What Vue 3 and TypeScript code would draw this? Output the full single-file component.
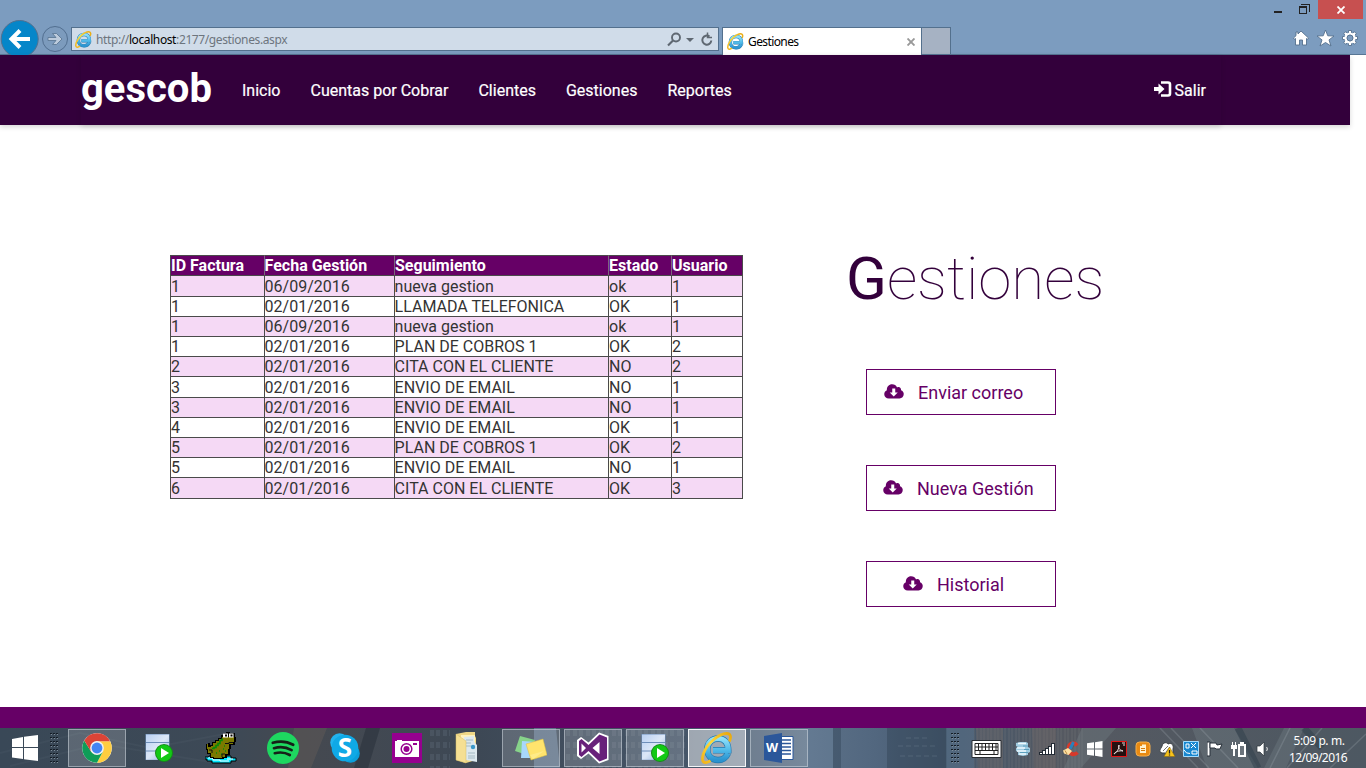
<script setup lang="ts">
interface Gestion {
  id: number
  fecha: string
  seguimiento: string
  estado: string
  usuario: number
}
interface Accion {
  texto: string
  clase: string
}
interface Tarea {
  icono: string
  estado: string
  letra?: string
}

const menu: string[] = ['Inicio', 'Cuentas por Cobrar', 'Clientes', 'Gestiones', 'Reportes']
const columnas: string[] = ['ID Factura', 'Fecha Gestión', 'Seguimiento', 'Estado', 'Usuario']

const g = (id: number, fecha: string, seguimiento: string, estado: string, usuario: number): Gestion =>
  ({ id, fecha, seguimiento, estado, usuario })

const gestiones: Gestion[] = [
  g(1, '06/09/2016', 'nueva gestion', 'ok', 1),
  g(1, '02/01/2016', 'LLAMADA TELEFONICA', 'OK', 1),
  g(1, '06/09/2016', 'nueva gestion', 'ok', 1),
  g(1, '02/01/2016', 'PLAN DE COBROS 1', 'OK', 2),
  g(2, '02/01/2016', 'CITA CON EL CLIENTE', 'NO', 2),
  g(3, '02/01/2016', 'ENVIO DE EMAIL', 'NO', 1),
  g(3, '02/01/2016', 'ENVIO DE EMAIL', 'NO', 1),
  g(4, '02/01/2016', 'ENVIO DE EMAIL', 'OK', 1),
  g(5, '02/01/2016', 'PLAN DE COBROS 1', 'OK', 2),
  g(5, '02/01/2016', 'ENVIO DE EMAIL', 'NO', 1),
  g(6, '02/01/2016', 'CITA CON EL CLIENTE', 'OK', 3),
]

const acciones: Accion[] = [
  { texto: 'Enviar correo', clase: 'correo' },
  { texto: 'Nueva Gestión', clase: 'nueva' },
  { texto: 'Historial', clase: 'historial' },
]

const tareas: Tarea[] = [
  { icono: 'chrome', estado: 'open' },
  { icono: 'server', estado: '' },
  { icono: 'frog', estado: '' },
  { icono: 'spotify', estado: '' },
  { icono: 'skype', estado: '', letra: 'S' },
  { icono: 'camera', estado: '' },
  { icono: 'folder', estado: '' },
  { icono: 'notes', estado: 'open' },
  { icono: 'vs', estado: 'open' },
  { icono: 'server', estado: 'open' },
  { icono: 'ie', estado: 'active' },
  { icono: 'word', estado: 'open', letra: 'W' },
]

const bandeja: string[] = ['db', 'signal', 'ccleaner', 'win', 'acrobat', 'orange', 'cloudwarn', 'intel', 'flag', 'battery', 'sound']
</script>

<template>
  <div class="desktop">
    <svg class="defs" width="0" height="0" aria-hidden="true">
      <defs>
        <linearGradient id="blueE" x1="0" y1="0" x2="0" y2="1">
          <stop offset="0" stop-color="#8fe0fa" /><stop offset=".55" stop-color="#4fb9e8" /><stop offset="1" stop-color="#2b93cf" />
        </linearGradient>
        <linearGradient id="gold" x1="0" y1="1" x2="1" y2="0">
          <stop offset="0" stop-color="#f0b41c" /><stop offset=".5" stop-color="#ffd93a" /><stop offset="1" stop-color="#e8a70e" />
        </linearGradient>
        <linearGradient id="rack" x1="0" y1="0" x2="1" y2="1">
          <stop offset="0" stop-color="#b9d0f2" /><stop offset=".5" stop-color="#dce7f7" /><stop offset="1" stop-color="#8eaedd" />
        </linearGradient>
      </defs>
      <symbol id="ie" viewBox="0 0 32 32">
        <path d="M27 21.2C25 25.800 21.500 28 17 28 10.500 28 6.300 23.500 6.300 17.300 6.300 10.800 11 6.500 17 6.500c6.300 0 10.300 4.200 10.300 11.800H12" fill="none" stroke="#2377ad" stroke-width="6.400" />
        <path d="M27 21.2C25 25.800 21.500 28 17 28 10.500 28 6.300 23.500 6.300 17.300 6.300 10.800 11 6.500 17 6.500c6.300 0 10.300 4.200 10.300 11.800H12" fill="none" stroke="url(#blueE)" stroke-width="5.200" />
        <path d="M28.500 9.500C30.500 4.500 29.500 1.500 25.500 1.500 18 1.500 6 11.500 2.500 21.500.5 27.500 1.500 31 5 30.500c1.500-.200 3-.900 4.500-1.900" fill="none" stroke="url(#gold)" stroke-width="2.800" />
      </symbol>
      <symbol id="chrome" viewBox="0 0 32 32">
        <circle cx="16" cy="16" r="14.800" fill="#fff" />
        <path d="M16 9.200H29.100A14.800 14.800 0 0 1 16 30.800L22 19.400Z" fill="#ffcd40" />
        <path d="M3.200 8.600A14.800 14.800 0 0 0 16 30.800L21.900 19.600 10.100 19.400Z" fill="#0f9d58" />
        <path d="M3.200 8.600 10 19.400 12 11 16 9.200H29.100A14.800 14.800 0 0 0 3.200 8.600Z" fill="#db4437" />
        <circle cx="16" cy="16" r="6.900" fill="#f1f1f1" /><circle cx="16" cy="16" r="5.400" fill="#4285f4" />
      </symbol>
      <symbol id="server" viewBox="0 0 32 32">
        <path d="M2.500 2h24v26h-24z" fill="#6d8eb9" />
        <path d="M3 2.500h23v7.500H3zM3 11h23v7.500H3zM3 19.500h23v8.200H3z" fill="url(#rack)" />
        <circle cx="21" cy="21" r="9" fill="#168b17" /><circle cx="21" cy="21" r="8" fill="#12c915" />
        <path d="M18 16v10l8-5z" fill="#fff" />
      </symbol>
      <symbol id="frog" viewBox="0 0 32 32">
        <path d="M0 25h4v-1h22v2h5v3h-5v2H7v-2H2v-2H0z" fill="#00e7ff" stroke="#000" />
        <path d="M3 26h5v2h7v1h9M22 27h6" stroke="#fff" fill="none" />
        <path d="M7 10h3V8h3V6h3V3h2V1h3V0h4v1h5v4h1v5h-1v3h-4v4h-1v6h-3v3h-3v1H8v-1H5v-4H2v-4H1v-6h2v-1h2v2h2z" fill="#000" />
        <path d="M8 11h3V9h3V7h3V5h12v5h-1v2h-4v5h-1v5h-3v3h-3v1H9v-1H6v-4H3v-4H2v-5h1v3h3v-1h2z" fill="#7c7900" />
        <path d="M18 1.500h5v4h-5zM24 1.500h4.500v4H24z" fill="#fff" /><path d="M20 2.500h2v2h-2zM25.500 2.500h2v2h-2z" fill="#000" />
        <path d="M17 6.500v2h-2v3h-2v2h-2v2H9v1H7M14 19h1M18 17h1M16 22h1M20 19h1M11 21h1M19 14h1" fill="none" stroke="#078b07" stroke-width="1.600" />
        <path d="M20 11.500h4v-1h4M17 25v-3h3M7 21v-3H4" fill="none" stroke="#111" />
      </symbol>
      <symbol id="spotify" viewBox="0 0 32 32">
        <circle cx="16" cy="16" r="16" fill="#1ed760" />
        <path d="M5.800 10.800c7-2.100 14.200-1.500 20.400 2M7 16.200c6.200-1.800 12.200-1.100 17.600 1.900M7.800 21.200c5.200-1.300 10.300-.900 15 1.800" stroke="#162018" stroke-width="2.700" stroke-linecap="round" fill="none" />
      </symbol>
      <symbol id="skype" viewBox="0 0 32 32">
        <circle cx="10.500" cy="10.500" r="9.300" fill="#22b3ee" /><circle cx="21.500" cy="21.500" r="9.300" fill="#0b9fdc" /><circle cx="16" cy="16" r="13.300" fill="#0fa9e6" />
      </symbol>
      <symbol id="camera" viewBox="0 0 32 32">
        <path d="M1 1h30v30H1z" fill="#96008f" /><path d="M4 9h2V8h5v1h17v16H4z" fill="#fff" />
        <circle cx="15.500" cy="17" r="5.300" fill="#fff" stroke="#96008f" stroke-width="1.500" /><circle cx="15.500" cy="17" r="3" fill="#96008f" />
        <path d="M22 11h4v2h-4z" fill="#96008f" />
      </symbol>
      <symbol id="folder" viewBox="0 0 32 32">
        <path d="M3 2 13 0h9v4l1 2v22l-10 3-10-3z" fill="#efd786" /><path d="M8 3h14v24H8z" fill="#fff2bd" />
        <path d="m11 5 10-1v6l3 3v17l-11-2z" fill="#dce8ee" /><path d="M13 8h7M13 11h5M13 14h5M15 21h7M15 24h7M15 26h7" stroke="#a4bac4" />
        <circle cx="20" cy="15" r="2.200" fill="#3b98c9" /><path d="m3 2 10 7v22l-10-3z" fill="#f5df93" stroke="#d4bc69" stroke-width=".500" />
      </symbol>
      <symbol id="notes" viewBox="0 0 32 32">
        <path d="m5 4 15 4-5 16L0 19z" fill="#87d38a" /><path d="m7 9 15 1-1 16H6z" fill="#a8d7fb" />
        <path d="m11 12 17-5 4 16-16 5z" fill="#ffe46d" stroke="#d9bd42" stroke-width=".500" /><path d="m15 23 14-4-11 8z" fill="#fff09b" opacity=".600" />
      </symbol>
      <symbol id="vs" viewBox="0 0 32 32">
        <path d="M22 .5 31.500 4v24L22 31.500 11.500 21.500 4 27 0 24V8l4-3 7.500 5.500z" fill="#fff" />
        <path d="M22.500 2.500 30 5.500v21l-7.500 3-11-10.500L4.500 25 2 23V9l2.500-2 7 6z" fill="#68217a" />
        <path d="m22.500 10-7 6 7 6zM4.500 11.500v9L9 16z" fill="#fff" />
      </symbol>
      <symbol id="word" viewBox="0 0 32 32">
        <path d="M17 4.500h13v23H17z" fill="#fff" stroke="#2b579a" /><path d="M19 8h9M19 11.500h9M19 15h9M19 18.500h9M19 22h9" stroke="#2b579a" stroke-width="1.500" />
        <path d="M1 4 19 1v30L1 28z" fill="#2b579a" />
      </symbol>
      <symbol id="db" viewBox="0 0 16 16">
        <path d="M1 2 5 1h6l2 1v4l2 1v4l-2 1v2l-5 1-5-1v-3l-2-1V7l2-1-2-1z" fill="#9fcbe0" />
        <path d="M3 2.500h8M2 7h8M2 10h9M4 13h7" stroke="#eefaff" stroke-width="1.300" /><path d="M8 5h5M9 8.500h5M5 11.500h8" stroke="#5b9fbd" />
      </symbol>
      <symbol id="signal" viewBox="0 0 16 16"><path d="M0 11h3V9h3V7h3V5h3V2h4v12H0z" fill="#222b35" /><path d="M1 12h2v1H1zM4 10h2v3H4zM7 8h2v5H7zM10 6h2v7h-2zM13 3h2v10h-2z" fill="#fff" /></symbol>
      <symbol id="ccleaner" viewBox="0 0 16 16">
        <path d="M14 4.500C11 .5 5.500 2 5.500 7.500S11 15 14.500 11.500" fill="none" stroke="#d8392a" stroke-width="3.800" />
        <path d="m10.500 1-3.500 7" stroke="#2a81bc" stroke-width="3" /><path d="m5 7 4 3-3.500 4L1 12.500 0 9.500z" fill="#ffdfa0" /><path d="m2 9.500 2 3.500" stroke="#b98c46" />
      </symbol>
      <symbol id="win" viewBox="0 0 16 16"><path d="M0 2.300 7 1.300v6.200H0zM8 1.200 15.500 0v7.500H8zM0 8.500h7v6.200l-7-1zM8 8.500h7.500V16L8 14.800z" fill="#fff" /></symbol>
      <symbol id="acrobat" viewBox="0 0 16 16"><path d="M.5.5h15v15H.5z" fill="#24100f" stroke="#e51515" /><path d="M8 4c-1.500 2.500 0 4.500 4 6-4-.8-8 1-9 3 2-1 6-6 5-9ZM11 2h3M12 4h2" fill="none" stroke="#ece1df" /></symbol>
      <symbol id="orange" viewBox="0 0 16 16"><rect x="1" y="1" width="14" height="14" rx="3.500" fill="#e98a12" stroke="#f5b04e" /><path d="M5 5h6v7H5zM7 3.500h4v2H7z" fill="#fff2cf" /><path d="M6 7.500h4M6 9.500h4" stroke="#d67b0e" /></symbol>
      <symbol id="cloudwarn" viewBox="0 0 16 16"><path d="M1 11C0 8 3 7 3 5c1-4 5-4 6-2 4-2 6 2 5 5v4H3z" fill="#fff" stroke="#3b4044" /><path d="m4 10 5-5M7 11l4-5" stroke="#777" /><path d="m10.500 6 5.500 9.500H5z" fill="#f8c31b" stroke="#84640b" stroke-width=".500" /><path d="M10.500 9v3.500M10.500 13.500v1" stroke="#222" stroke-width="1.300" /></symbol>
      <symbol id="intel" viewBox="0 0 16 16"><path d="M.5.5h15v15H.5z" fill="#1787d0" stroke="#a2dcff" /><path d="M3 3h3v4H3zM8 2l5 5M13 2 8 7M1 9q2 4 6 3.500M9 10h5v3H9z" fill="none" stroke="#fff" /></symbol>
      <symbol id="flag" viewBox="0 0 16 16"><path d="M0 1h3v14H0z" fill="#fff" stroke="#28313a" /><path d="M3 2h6l1 2 5-1-2 5H9L8 7H3z" fill="#fff" stroke="#28313a" /></symbol>
      <symbol id="battery" viewBox="0 0 16 16"><path d="M7 3h2V1h4v2h2v13H7z" fill="#fff" /><path d="M9 5h4v9H9z" fill="#6b747c" /><path d="M1.500 1v3M4.500 1v3" stroke="#fff" /><path d="M0 4h6v4H4v7H2V8H0z" fill="#fff" /></symbol>
      <symbol id="sound" viewBox="0 0 16 16"><path d="M2 5h3l4-4v14l-4-4H2z" fill="#fff" stroke="#2d343b" stroke-width=".700" /><path d="M11.500 6c1 1 1 3 0 4" stroke="#eee" fill="none" /></symbol>
      <symbol id="grip" viewBox="0 0 8 31">
        <path v-for="n in 8" :key="n" :d="`M0 ${(n - 1) * 4 + .5}h2m1 0h2m1 0h2`" stroke="#141c25" stroke-width="1" />
        <path v-for="n in 8" :key="'l' + n" :d="`M1 ${(n - 1) * 4 + 1.5}h1m2 0h1m2 0h1`" stroke="#7d8b98" stroke-width="1" />
      </symbol>
    </svg>

    <header class="browser">
      <div class="window-buttons">
        <svg width="60" height="19" viewBox="0 0 60 19" shape-rendering="crispEdges">
          <path d="M6 11h8v2H6z" fill="#222" /><path d="M31.500 6.500h7v7h-7zM33 4.500h8.500V12" fill="none" stroke="#222" /><path d="M31 6h8v2h-8z" fill="#222" />
        </svg>
        <span class="close"><svg width="8" height="8" viewBox="0 0 8 8"><path d="m.5.500 7 7m0-7-7 7" stroke="#fff" stroke-width="1.800" /></svg></span>
      </div>
      <div class="toolbar">
        <svg class="nav-arrows" width="71" height="35" viewBox="0 0 71 35">
          <circle cx="19.700" cy="19" r="18.500" fill="#0586c9" stroke="#52708f" />
          <path d="M11.500 19h18.500M20 10.500 11.500 19l8.500 8.500" fill="none" stroke="#fff" stroke-width="4" />
          <circle cx="55" cy="19" r="12.500" fill="#7c9bbd" stroke="#526f90" />
          <path d="M48 17.500h8l-3.500-4h4l5.500 5.500-5.500 5.500h-4l3.500-4h-8z" fill="#bccbdc" stroke="#56728f" stroke-width=".800" />
        </svg>
        <div class="address">
          <svg class="favicon"><use href="#ie" /></svg>
          <span class="url">http://<b>localhost</b>:2177/gestiones.aspx</span>
          <svg class="addr-icons" width="48" height="18" viewBox="0 0 48 18" fill="none" stroke="#5f6872">
            <circle cx="9" cy="7.500" r="4" stroke-width="1.900" /><path d="m6 10.500-5 5" stroke-width="2.200" />
            <path d="M19 8h8l-4 4z" fill="#5f6872" stroke="none" />
            <path d="M42.500 6.500a4.500 4.500 0 1 0 1.800 4" stroke-width="2" /><path d="M40.500 2.500v5H45" stroke-width="1.500" />
          </svg>
        </div>
        <div class="tab">
          <svg class="favicon"><use href="#ie" /></svg>
          <span>Gestiones</span>
          <svg width="8" height="8" viewBox="0 0 8 8"><path d="m.5.500 7 7m0-7-7 7" stroke="#999" stroke-width="1.900" /></svg>
        </div>
        <div class="new-tab"></div>
        <svg class="tools" width="68" height="20" viewBox="0 0 68 20" fill="#fff" stroke="#55708d" stroke-width=".900">
          <path d="m8 2 7.500 7-1 1.300L13.500 9.500V16H9.500v-5h-3v5h-4V9.500l-1 .800L.5 9 3 6.700V3h2v2z" />
          <path d="m32.500 1 2.300 5.800 6.200.2-5 3.900 2 6.100-5.500-3.500-5.500 3.500 2-6.100-5-3.900 6.200-.2z" />
          <g transform="translate(57 9)">
            <path v-for="a in 8" :key="a" :transform="`rotate(${a * 45})`" d="M-1.500-7.500h3v4h-3z" />
            <circle r="4.400" fill="none" stroke="#fff" stroke-width="2.400" /><circle r="3" fill="#7c9cbf" />
          </g>
        </svg>
      </div>
    </header>

    <div class="page">
      <nav class="navbar">
        <div class="nav-inner">
          <span class="brand">gescob</span>
          <a v-for="m in menu" :key="m">{{ m }}</a>
          <a class="exit">
            <svg width="18" height="16" viewBox="0 0 18 16"><path d="M0 6h4.500V2.500L10.500 8l-6 5.500V10H0z" fill="#fff" /><path d="M7 1.500h7q2 0 2 2v9q0 2-2 2H7" fill="none" stroke="#fff" stroke-width="2.600" /></svg>
            Salir
          </a>
        </div>
      </nav>

      <main class="content">
        <table class="grid">
          <colgroup><col class="c1"><col class="c2"><col class="c3"><col class="c4"><col class="c5"></colgroup>
          <thead><tr><th v-for="c in columnas" :key="c">{{ c }}</th></tr></thead>
          <tbody>
            <tr v-for="(r, i) in gestiones" :key="i" :class="{ tall: i % 5 === 0 }">
              <td>{{ r.id }}</td><td>{{ r.fecha }}</td><td>{{ r.seguimiento }}</td><td>{{ r.estado }}</td><td>{{ r.usuario }}</td>
            </tr>
          </tbody>
        </table>
        <section class="side">
          <h1><b>G</b>estiones</h1>
          <button v-for="a in acciones" :key="a.texto" :class="a.clase">
            <svg width="20" height="15" viewBox="0 0 20 15"><path fill="#606" fill-rule="evenodd" d="M4.500 14.500C2 14.500 0 12.700 0 10.200 0 8.300 1 7 2.600 6.200 2.400 2.800 4.700.3 7.900.3c2.200 0 4 1.200 4.900 3.100 2-1.200 4.300.2 4 2.800 1.600.500 2.700 2 2.700 3.900 0 2.500-1.900 4.400-4.200 4.400zM8 4.500v4H5.500l4 4 4-4H11v-4z" /></svg>
            <span>{{ a.texto }}</span>
          </button>
        </section>
      </main>
      <footer class="footer"></footer>
    </div>

    <div class="taskbar">
      <svg class="wallpaper" width="1366" height="40" viewBox="0 0 1366 40" preserveAspectRatio="none">
        <defs>
          <linearGradient id="sky"><stop offset="0" stop-color="#394857" /><stop offset=".17" stop-color="#3d4956" /><stop offset=".22" stop-color="#454950" /><stop offset=".35" stop-color="#3d4855" /><stop offset=".5" stop-color="#455568" /><stop offset=".59" stop-color="#5c7188" /><stop offset=".64" stop-color="#52677f" /><stop offset=".7" stop-color="#45576b" /><stop offset=".78" stop-color="#555961" /><stop offset="1" stop-color="#4d5862" /></linearGradient>
          <pattern id="windows" width="13" height="12" patternUnits="userSpaceOnUse"><path d="M1 2h4v6H1zM7 2h4v6H7z" fill="#71808b" opacity=".220" /></pattern>
          <pattern id="ribs" width="7" height="40" patternUnits="userSpaceOnUse"><path d="M1 0v40M4 0v40" stroke="#a0978f" opacity=".200" /></pattern>
        </defs>
        <path d="M0 0h1366v40H0z" fill="url(#sky)" />
        <path d="m0 25 80-20 70 15 80-15M10 38l90-22 110 18" stroke="#81909b" stroke-width="2" opacity=".080" fill="none" />
        <path d="M294 0h33l-16 40h-23z" fill="#71625a" opacity=".320" /><path d="M366 0h14l-12 40h-14z" fill="#252e37" opacity=".500" />
        <path d="M428 0h22v40h-22zM565 0h120v40H565z" fill="url(#windows)" />
        <path d="M534 0h22l4 40h-26z" fill="#8ba7c9" opacity=".400" /><path d="M808 0h25v40h-25z" fill="#809ab4" opacity=".220" />
        <path d="M833 0h8v40h-8zM887 0h60v40h-60z" fill="#29394a" opacity=".350" />
        <path d="M906 10h22M898 18h38M900 28h38" stroke="#899bab" stroke-dasharray="5 3" opacity=".250" />
        <path d="M946 0h28v40h-28z" fill="#6e8aa5" opacity=".300" /><path d="M974 0h110v40H974z" fill="url(#ribs)" />
        <path d="M976 0h27v40h-25zM1032 0h24v40h-22z" fill="#756b68" opacity=".330" />
        <path d="M1082 0h34l-35 40h-17zM1192 0h42l24 40h-51zM1284 0h20l-18 40h-22z" fill="#7c8790" opacity=".300" />
        <path d="m1160 0 38 40M1171 0l38 40M1200 0l38 40M1290 0l-20 40M1322 0l-35 40M1366 6l-36 34" stroke="#afb8bf" stroke-width="1.500" opacity=".220" />
        <path d="m1238 0 20 40M1304 0l18 20" stroke="#263845" stroke-width="7" opacity=".400" />
      </svg>
      <div class="task-items">
        <svg class="start" width="28" height="28" viewBox="0 0 28 28"><path d="M1 5 12 3v10H1zM13 2.800 27 1v12H13zM1 14h11v11L1 23.500zM13 14h14v13l-14-1.800z" fill="#fff" /></svg>
        <svg class="grip-left" width="8" height="31"><use href="#grip" /></svg>
        <div class="tasks">
          <span v-for="(t, i) in tareas" :key="i" :class="['task', t.estado]">
            <svg width="32" height="32"><use :href="'#' + t.icono" /></svg>
            <i v-if="t.letra" :class="['letter', t.icono]">{{ t.letra }}</i>
          </span>
        </div>
        <svg class="grip-right" width="8" height="31"><use href="#grip" /></svg>
        <svg class="keyboard" width="32" height="20" viewBox="0 0 32 20"><path d="M1 1.500h29v17H1z" fill="#fff" stroke="#292d32" /><path d="M4 4.500h23v11H4zM4 8h23M4 11.500h23M7.500 4v7.500M11 4v7.500M14.500 4v7.500M18 4v7.500M21.500 4v7.500M25 4v7.500M9 12v3.500M23 12v3.500" fill="none" stroke="#222" /></svg>
        <div class="tray"><svg v-for="b in bandeja" :key="b" width="16" height="16"><use :href="'#' + b" /></svg></div>
        <div class="clock"><span>5:09 p. m.</span><span>12/09/2016</span></div>
      </div>
    </div>
  </div>
</template>

<style>
html, body { overflow: hidden; background: #fff; }
</style>

<style scoped>
* { box-sizing: border-box; }
.desktop { width: 1366px; height: 768px; display: flex; flex-direction: column; font-family: Roboto, sans-serif; overflow: hidden; background: #fff; }
svg { display: block; flex: none; }
.defs { position: absolute; }
.browser { height: 55px; flex: none; background: #7c9cbf; border-bottom: 1px solid #587695; display: flex; flex-direction: column; font-family: "Noto Sans", sans-serif; }
.window-buttons { height: 19px; display: flex; justify-content: flex-end; margin-bottom: 1px; padding-right: 3px; }
.window-buttons > svg { margin-right: -10px; }
.close { width: 45px; background: #c75050; display: flex; align-items: center; justify-content: center; }
.toolbar { height: 35px; display: flex; align-items: flex-start; }
.address { width: 648px; height: 24px; margin-top: 7px; border: 1px solid #53708d; background: #d0dce9; display: flex; align-items: center; padding: 0 3px 0 3px; color: #6d757e; }
.favicon { width: 17px; height: 17px; }
.url { font-size: 12px; letter-spacing: -0.39px; margin-left: 4px; white-space: nowrap; padding-top: 1px; }
.url b { font-weight: 400; color: #000; }
.addr-icons { margin-left: auto; }
.tab { width: 200px; height: 28px; margin: 7px 0 0 3px; background: #fff; border: 1px solid #53708d; border-bottom: 0; display: flex; align-items: center; padding: 0 6px 0 4px; font-size: 12px; letter-spacing: -0.6px; }
.tab span { margin-left: 4px; flex: 1; }
.new-tab { width: 29px; height: 27px; margin-top: 7px; background: #a6b2c3; border: 1px solid #53708d; border-left: 0; border-bottom: 0; }
.tools { margin: 9px 5px 0 auto; }

.page { height: 673px; flex: none; display: flex; flex-direction: column; }
.navbar { width: 1350px; height: 70px; flex: none; background: #33003b; box-shadow: 0 2px 5px rgba(0, 0, 0, .16); display: flex; }
.nav-inner { width: 1140px; height: 70px; margin-left: 81px; padding-right: 15px; display: flex; align-items: center; color: #fff; box-shadow: 0 2px 5px rgba(0, 0, 0, .12); }
.brand { width: 146px; font-size: 40px; font-weight: 700; line-height: 68px; margin-top: -2px; }
.nav-inner a { padding: 2px 15px 0; font-size: 16px; font-weight: 400; line-height: 20px; white-space: nowrap; -webkit-text-stroke: .2px #fff; }
.nav-inner .exit { margin-left: auto; padding: 2px 0 0; display: flex; gap: 3px; }
.content { flex: 1; display: flex; align-items: flex-start; padding: 130px 0 0 170px; }
.grid { width: 573px; table-layout: fixed; border-collapse: separate; border-spacing: 0; border-right: 1px solid #4a4a4a; border-bottom: 1px solid #4a4a4a; font-size: 16px; line-height: 19px; color: #333; }
.c1 { width: 94px; } .c2 { width: 130px; } .c3 { width: 214px; } .c4 { width: 63px; } .c5 { width: 71px; }
.grid th, .grid td { padding: 0; height: 20px; border-top: 1px solid #4a4a4a; border-left: 1px solid #4a4a4a; text-align: left; vertical-align: bottom; white-space: nowrap; }
.grid th:nth-child(2), .grid td:nth-child(2), .grid td:nth-child(3) { text-indent: -.4px; }
.grid th { background: #606; color: #fff; font-weight: 700; border-left-color: #7d657d; }
.grid th:first-child { border-left-color: #4a4a4a; }
.grid .tall td { height: 21px; }
.grid tbody tr:nth-child(odd) { background: #f5d9f5; }
.side { margin-left: 105px; display: flex; flex-direction: column; }
.side h1 { margin: -11px 0 55px -2px; height: 70px; line-height: 70px; font-size: 60px; font-weight: 100; color: #33003b; white-space: nowrap; }
.side h1 b { font-weight: 400; }
.side button { width: 190px; height: 46px; margin: 0 0 50px 18px; border: 1px solid #606; background: #fff; color: #606; font: 400 18px Roboto, sans-serif; display: flex; align-items: center; gap: 14px; padding: 0 0 0 17px; }
.side button svg { margin: -1px 0 0 -.5px; width: 20.500px; }
.side .nueva { padding-left: 16px; }
.side .historial { padding-left: 36px; }
.footer { height: 21px; flex: none; background: #606; }

.taskbar { height: 40px; flex: none; position: relative; }
.wallpaper { position: absolute; inset: 0; }
.task-items { position: relative; height: 40px; display: flex; align-items: flex-start; }
.start { margin: 6px 0 0 11px; }
.grip-left { margin: 5px 0 0 11px; }
.tasks { display: flex; gap: 4px; margin: 1px 0 0 10px; }
.task { position: relative; width: 58px; height: 38px; border: 1px solid transparent; display: flex; align-items: center; justify-content: center; }
.task.open { background: rgba(255, 255, 255, .17); border-color: rgba(215, 223, 231, .5); }
.task.active { background: rgba(255, 255, 255, .48); border-color: #f3f5f7; }
.letter { position: absolute; font: 700 26px/35px "Open Sans", sans-serif; color: #fff; inset: 0; text-align: center; }
.letter.word { font-size: 12.500px; right: 14px; }
.grip-right { margin: 5px 0 0 143px; }
.keyboard { margin: 11px 0 0 12px; }
.tray { display: flex; gap: 8px; margin: 13px 0 0 12px; }
.clock { width: 94px; display: flex; flex-direction: column; align-items: center; font: 12px/17px "Noto Sans", sans-serif; letter-spacing: -0.6px; color: #fff; padding-top: 4px; white-space: nowrap; }
.clock span:first-child { letter-spacing: -0.4px; margin-left: 2px; }
</style>
